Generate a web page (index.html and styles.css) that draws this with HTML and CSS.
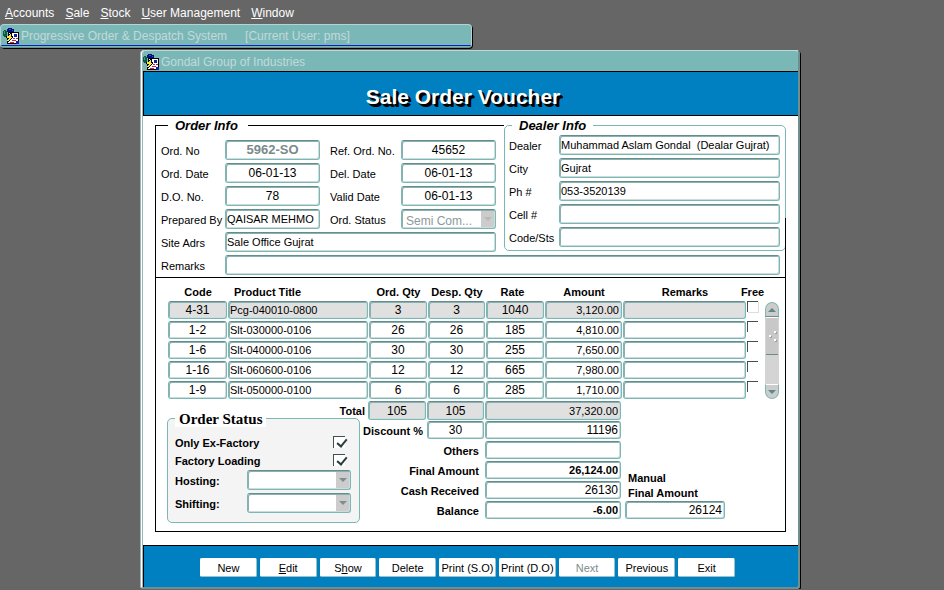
FILE: index.html
```html
<!DOCTYPE html>
<html lang="en">
<head>
<meta charset="utf-8">
<title>Progressive Order &amp; Despatch System</title>
<link rel="stylesheet" href="styles.css">
</head>
<body>
<svg class="defs" aria-hidden="true">
  <symbol id="app-icon" viewBox="0 0 16 16" shape-rendering="crispEdges">
    <path fill="#00107c" d="M5 0h4v1h2v3H4V1h1z"/>
    <path fill="#1c58b0" d="M6 1h2v1H6zM9 2h1v1H9z"/>
    <path fill="#0c5c48" d="M1 2h2v1h1v5H3v1H1V8H0V3h1z"/>
    <path fill="#38a070" d="M1 3h1v3H1z"/>
    <path fill="#000" d="M5 4h11v12H4V9H3V8h2z"/>
    <path fill="#fff" d="M6 5h9v10H5V9h1z"/>
    <path fill="#1020a0" d="M11 6h3v3h-3zM13 13h3v3h-3z"/>
    <path fill="#d02040" d="M10 10h2v1h-2zM13 10h2v1h-2zM9 12h4v1H9zM7 14h4v1H7z"/>
    <path fill="#000" d="M7 5h2v3h1v2H9v1H8v1H7v1H6v1H4v-3h1v-1H3V8h2V7h1V6h1z"/>
    <path fill="#f8e840" d="M7 6h1v3h1v1H8v1H7v1H6v1H4v-1h1v-1h1v-1H4V8h2V7h1z"/>
  </symbol>
</svg>

<nav class="menu">
  <a href="#"><u>A</u>ccounts</a>
  <a href="#"><u>S</u>ale</a>
  <a href="#"><u>S</u>tock</a>
  <a href="#"><u>U</u>ser Management</a>
  <a href="#"><u>W</u>indow</a>
</nav>

<header class="app-bar">
  <svg class="icon" aria-hidden="true"><use href="#app-icon"/></svg>
  <span>Progressive Order &amp; Despatch System</span>
  <span class="user">[Current User: pms]</span>
</header>

<main class="window">
  <div class="title-bar">
    <svg class="icon" aria-hidden="true"><use href="#app-icon"/></svg>
    <span>Gondal Group of Industries</span>
  </div>
  <h1 class="banner">Sale Order Voucher</h1>

  <form class="voucher">
    <div class="info">
      <fieldset class="order">
        <legend>Order Info</legend>
        <div class="order-grid">
          <label for="ord-no">Ord. No</label>
          <input id="ord-no" class="mid locked" value="5962-SO">
          <label class="second" for="ref-no">Ref. Ord. No.</label>
          <input id="ref-no" class="mid" value="45652">
          <label for="ord-date">Ord. Date</label>
          <input id="ord-date" class="mid" value="06-01-13">
          <label class="second" for="del-date">Del. Date</label>
          <input id="del-date" class="mid" value="06-01-13">
          <label for="do-no">D.O. No.</label>
          <input id="do-no" class="mid" value="78">
          <label class="second" for="valid-date">Valid Date</label>
          <input id="valid-date" class="mid" value="06-01-13">
          <label for="prepared">Prepared By</label>
          <input id="prepared" value="QAISAR MEHMO">
          <label class="second" for="ord-status">Ord. Status</label>
          <span class="pick faded">
            <select id="ord-status" disabled><option>Semi Com...</option></select>
          </span>
          <label for="site">Site Adrs</label>
          <input id="site" class="wide" value="Sale Office Gujrat">
        </div>
      </fieldset>
      <fieldset class="dealer">
        <legend>Dealer Info</legend>
        <div class="dealer-grid">
          <label for="dealer">Dealer</label>
          <input id="dealer" value="Muhammad Aslam Gondal  (Dealar Gujrat)">
          <label for="city">City</label>
          <input id="city" value="Gujrat">
          <label for="phone">Ph #</label>
          <input id="phone" value="053-3520139">
          <label for="cell">Cell #</label>
          <input id="cell">
          <label for="sts">Code/Sts</label>
          <input id="sts">
        </div>
      </fieldset>
      <div class="remarks">
        <label for="remarks">Remarks</label>
        <input id="remarks">
      </div>
    </div>

    <section class="lines">
      <div class="items">
        <table>
          <colgroup>
            <col class="c-code"><col><col class="c-qty"><col class="c-desp"><col class="c-qty"><col class="c-amount"><col class="c-remarks"><col class="c-free">
          </colgroup>
          <thead>
            <tr><th>Code</th><th class="left">Product Title</th><th>Ord. Qty</th><th>Desp. Qty</th><th class="rate">Rate</th><th>Amount</th><th>Remarks</th><th><span class="free">Free</span></th></tr>
          </thead>
          <tbody>
            <tr class="current">
              <td><input class="mid" aria-label="Code" value="4-31"></td>
              <td><input aria-label="Product Title" value="Pcg-040010-0800"></td>
              <td><input class="mid" aria-label="Ordered quantity" value="3"></td>
              <td><input class="mid" aria-label="Despatched quantity" value="3"></td>
              <td><input class="mid" aria-label="Rate" value="1040"></td>
              <td><input class="num" aria-label="Amount" value="3,120.00"></td>
              <td><input aria-label="Remarks"></td>
              <td><input type="checkbox" aria-label="Free"></td>
            </tr>
            <tr>
              <td><input class="mid" aria-label="Code" value="1-2"></td>
              <td><input aria-label="Product Title" value="Slt-030000-0106"></td>
              <td><input class="mid" aria-label="Ordered quantity" value="26"></td>
              <td><input class="mid" aria-label="Despatched quantity" value="26"></td>
              <td><input class="mid" aria-label="Rate" value="185"></td>
              <td><input class="num" aria-label="Amount" value="4,810.00"></td>
              <td><input aria-label="Remarks"></td>
              <td><input type="checkbox" aria-label="Free"></td>
            </tr>
            <tr>
              <td><input class="mid" aria-label="Code" value="1-6"></td>
              <td><input aria-label="Product Title" value="Slt-040000-0106"></td>
              <td><input class="mid" aria-label="Ordered quantity" value="30"></td>
              <td><input class="mid" aria-label="Despatched quantity" value="30"></td>
              <td><input class="mid" aria-label="Rate" value="255"></td>
              <td><input class="num" aria-label="Amount" value="7,650.00"></td>
              <td><input aria-label="Remarks"></td>
              <td><input type="checkbox" aria-label="Free"></td>
            </tr>
            <tr>
              <td><input class="mid" aria-label="Code" value="1-16"></td>
              <td><input aria-label="Product Title" value="Slt-060600-0106"></td>
              <td><input class="mid" aria-label="Ordered quantity" value="12"></td>
              <td><input class="mid" aria-label="Despatched quantity" value="12"></td>
              <td><input class="mid" aria-label="Rate" value="665"></td>
              <td><input class="num" aria-label="Amount" value="7,980.00"></td>
              <td><input aria-label="Remarks"></td>
              <td><input type="checkbox" aria-label="Free"></td>
            </tr>
            <tr>
              <td><input class="mid" aria-label="Code" value="1-9"></td>
              <td><input aria-label="Product Title" value="Slt-050000-0100"></td>
              <td><input class="mid" aria-label="Ordered quantity" value="6"></td>
              <td><input class="mid" aria-label="Despatched quantity" value="6"></td>
              <td><input class="mid" aria-label="Rate" value="285"></td>
              <td><input class="num" aria-label="Amount" value="1,710.00"></td>
              <td><input aria-label="Remarks"></td>
              <td><input type="checkbox" aria-label="Free"></td>
            </tr>
          </tbody>
        </table>
        <div class="scroller">
          <button type="button" class="up" aria-label="Scroll up"></button>
          <div class="thumb">
            <svg viewBox="0 0 12 37" aria-hidden="true"><path fill="#fff" d="M8 13h2v2H8zM3 17h2v2H3zM8 21h2v2H8z"/><path fill="#8fa5a5" d="M10 14h1v2H9v-1h1zM5 18h1v2H4v-1h1zM10 22h1v2H9v-1h1z"/></svg>
          </div>
          <button type="button" class="down" aria-label="Scroll down"></button>
        </div>
      </div>

      <div class="summary">
        <fieldset class="status">
          <legend>Order Status</legend>
          <div class="status-grid">
            <label for="ex">Only Ex-Factory</label>
            <input type="checkbox" id="ex" checked>
            <label for="loading">Factory Loading</label>
            <input type="checkbox" id="loading" checked>
            <label for="hosting">Hosting:</label>
            <span class="pick"><select id="hosting"><option></option></select></span>
            <label for="shifting">Shifting:</label>
            <span class="pick"><select id="shifting"><option></option></select></span>
          </div>
        </fieldset>
        <label class="t-total" for="total">Total</label>
        <input class="mid shade t-ord" aria-label="Total ordered" value="105">
        <input class="mid shade t-desp" aria-label="Total despatched" value="105">
        <input class="num shade t-sum" id="total" value="37,320.00">
        <label class="t-discount" for="discount">Discount %</label>
        <input class="mid large t-desp" id="discount" value="30">
        <input class="num large t-sum" aria-label="Discount amount" value="11196">
        <label class="t-label" for="others">Others</label>
        <input class="num t-sum" id="others">
        <label class="t-label" for="final">Final Amount</label>
        <input class="num strong t-sum" id="final" value="26,124.00">
        <label class="t-label" for="cash">Cash Received</label>
        <input class="num large t-sum" id="cash" value="26130">
        <label class="t-label" for="balance">Balance</label>
        <input class="num strong t-sum" id="balance" value="-6.00">
        <label class="t-manual" for="manual">Manual<br>Final Amount</label>
        <input class="num large t-manual-value" id="manual" value="26124">
      </div>
    </section>
  </form>

  <footer class="actions">
    <button type="button">New</button>
    <button type="button"><u>E</u>dit</button>
    <button type="button">S<u>h</u>ow</button>
    <button type="button">Delete</button>
    <button type="button">Print (S.O)</button>
    <button type="button">Print (D.O)</button>
    <button type="button" disabled>Next</button>
    <button type="button">Previous</button>
    <button type="button">Exit</button>
  </footer>
</main>
</body>
</html>
```
FILE: styles.css
```css
:root {
  --teal: #7ab8b8;
  --teal-dark: #628e8e;
  --blue: #0080c0;
  --shade: #e0e0e0;
}

* {
  box-sizing: border-box;
}

body {
  margin: 0;
  background: #666;
  color: #000;
  font: 11px/16px "Liberation Sans", Arial, sans-serif;
}

.defs {
  display: none;
}

.icon {
  width: 16px;
  height: 16px;
  flex: none;
}

/* menu and window bars */
.menu {
  display: flex;
  gap: 11px;
  padding: 5px 5px 3px;
  font-size: 12px;
}

.menu a {
  color: #fff;
  text-decoration: none;
}

.app-bar {
  display: flex;
  align-items: center;
  gap: 2px;
  width: 50%;
  height: 24px;
  padding-left: 2px;
  border: 1px solid #b4d4d4;
  border-bottom-color: #718e8e;
  border-radius: 4px;
  background: linear-gradient(var(--teal) 20px, #1020c0 20px, #1020c0 21px, var(--teal) 21px);
  box-shadow: 1px 1px #000;
  color: #c4d8d8;
  font-size: 12px;
}

.user {
  margin-left: 16px;
}

.window {
  margin: 2px 144px 0 140px;
  border: 1px solid #c0d8d8;
  border-right: 2px solid #708e8e;
  border-bottom: 2px solid #708e8e;
  border-left: 3px double #9ab8b8;
  border-radius: 4px 4px 3px 3px;
  box-shadow: 1px 1px #000;
  background: #fff;
  overflow: hidden;
}

.title-bar {
  display: flex;
  align-items: center;
  gap: 2px;
  height: 20px;
  padding: 2px 0 0;
  background: var(--teal);
  color: #c4d8d8;
  font-size: 12px;
}

.banner {
  margin: 0;
  border: solid #000;
  border-width: 1px 0 1px 1px;
  padding: 14px 16px 7px 0;
  background: var(--blue);
  color: #fff;
  font-size: 21px;
  line-height: 22px;
  text-align: center;
  text-shadow: 2px 2px #000, 3px 3px #000;
}

/* fields */
input,
select {
  width: 100%;
  min-width: 0;
  height: 20px;
  margin: 0;
  padding: 0 1px;
  border: 1px solid var(--teal);
  border-top-color: var(--teal-dark);
  border-radius: 3px;
  background: #fff;
  box-shadow: inset 1px 1px #8cb0b0, inset -1px -1px #d0dcdc;
  color: #000;
  font: inherit;
}

.mid {
  font-size: 12px;
  text-align: center;
}

.large {
  font-size: 12px;
}

.num {
  padding-right: 2px;
  text-align: right;
}

.strong {
  font-weight: bold;
}

.locked {
  color: #7a8a8a;
  font-size: 13px;
  font-weight: bold;
}

.pick {
  position: relative;
  display: block;
}

.pick select {
  display: block;
  appearance: none;
  padding: 0 16px 0 4px;
  background: linear-gradient(#ccc, #ccc) right / 14px 100% no-repeat #fff;
  opacity: 1;
  font-size: 12px;
}

.pick select:disabled {
  color: #8c9a9a;
}

.pick::after {
  content: "";
  position: absolute;
  top: 8px;
  right: 4px;
  border: 4px solid transparent;
  border-top-color: #7a9090;
  border-bottom: 0;
}

.faded::after {
  border-top-color: #b8b8b8;
}

input[type="checkbox"] {
  appearance: none;
  display: block;
  width: 11px;
  height: 11px;
  border: solid #405050;
  border-width: 1px 0 0 1px;
  border-radius: 0;
  box-shadow: none;
}

/* voucher panel */
.voucher {
  padding: 1px 12px 13px;
}

fieldset {
  min-width: 0;
  margin: 0;
  padding: 0;
  border: 0 solid #000;
}

legend {
  padding: 0 7px;
  font-size: 13px;
  font-style: italic;
  font-weight: bold;
  line-height: 17px;
}

.info {
  position: relative;
  display: grid;
  grid-template-columns: 349fr 282fr;
}

.info::after {
  content: "";
  position: absolute;
  top: 101px;
  right: 0;
  bottom: 0;
  border-right: 1px solid #000;
}

.order {
  border-width: 1px 0 0 1px;
  padding: 6px 8px 0 5px;
}

.order legend {
  margin-left: 7px;
  padding-right: 10px;
}

.order-grid {
  display: grid;
  grid-template-columns: 64px 1fr 81px 1fr;
  gap: 3px 0;
  line-height: 22px;
}

.order-grid > *,
.dealer-grid > *,
.remarks > * {
  height: 20px;
}

.second {
  padding-left: 10px;
}

.wide {
  grid-column: 2 / -1;
}

.dealer {
  align-self: start;
  padding: 1px 5px 3px 4px;
  border: 1px solid var(--teal);
  border-radius: 5px;
}

.dealer legend {
  margin-left: 3px;
}

.dealer-grid {
  display: grid;
  grid-template-columns: 50px 1fr;
  gap: 3px 0;
  line-height: 22px;
}

.remarks {
  display: flex;
  grid-column: 1 / -1;
  padding: 3px 6px 2px 5px;
  border-left: 1px solid #000;
  line-height: 22px;
}

.remarks label {
  flex: 0 0 64px;
}

.lines {
  padding: 4px 6px 10px 12px;
  border: 1px solid #000;
}

.items {
  display: flex;
}

table {
  flex: 1;
  width: 0;
  table-layout: fixed;
  border-collapse: collapse;
}

.c-code { width: 60px; }
.c-qty { width: 59px; }
.c-desp { width: 58px; }
.c-amount { width: 78px; }
.c-remarks { width: 124px; }
.c-free { width: 18px; }

th {
  padding: 2px 0 0;
  line-height: 17px;
  white-space: nowrap;
}

.left {
  padding-left: 6px;
  text-align: left;
}

.rate {
  padding-right: 6px;
}

.free {
  display: block;
  margin-left: -7px;
}

td {
  height: 20px;
  padding: 0 1px 0 0;
  vertical-align: top;
}

td input {
  display: block;
  height: 18px;
}

.current input {
  background: var(--shade);
}

.current input[type="checkbox"] {
  background: #fff;
  box-shadow: 1px 1px #ddd;
}

.scroller {
  display: flex;
  flex-direction: column;
  width: 14px;
  height: 97px;
  border-radius: 7px;
  background: #d4d4d4;
  margin-top: 20px;
  overflow: hidden;
}

.scroller button {
  height: 15px;
  padding: 0;
  border: 1px solid var(--teal);
  background: #ccc;
}

.scroller button::before {
  content: "";
  display: block;
  width: 0;
  margin: 0 auto;
  border: 4px solid transparent;
}

.scroller .up {
  border-radius: 7px 7px 0 0;
  border-bottom-color: #6a8c8c;
}

.scroller .up::before {
  border-bottom-color: #5f8888;
  border-top: 0;
}

.scroller .down {
  margin-top: auto;
  border-radius: 0 0 7px 7px;
  border-top-color: #fff;
}

.scroller .down::before {
  border-top-color: #5f8888;
  border-bottom: 0;
}

.thumb {
  height: 38px;
  margin: 0 1px;
  border-top: 1px solid #fff;
  border-bottom: 1px solid #6a8c8c;
  background: #c8c8c8;
}

.thumb svg {
  display: block;
  width: 12px;
  height: 37px;
}

/* totals */
.summary {
  display: grid;
  grid-template-columns: 1fr 7px 59px 58px 137px 157px;
  grid-auto-rows: 20px;
  font-weight: bold;
  line-height: 20px;
}

.summary input {
  height: 18px;
  font-weight: normal;
}

.summary input.strong {
  font-weight: bold;
}

.summary .shade {
  height: 19px;
  background: var(--shade);
}

.summary > label {
  justify-self: end;
  white-space: nowrap;
}

.t-total {
  grid-area: 1 / 1 / 2 / 3;
  margin-right: 3px;
}

.t-ord {
  grid-column: 3;
}

.t-desp {
  grid-column: 4;
}

.t-ord,
.t-desp,
.t-sum {
  margin-right: 1px;
  justify-self: stretch;
}

.summary .t-ord,
.summary .t-desp,
.summary .t-sum {
  width: auto;
}

.t-sum {
  grid-column: 5;
}

.t-discount {
  grid-column: 3 / 4;
  margin-right: 4px;
}

.t-label {
  grid-column: 3 / 5;
  margin-right: 6px;
}

.summary > .t-manual {
  grid-area: 4 / 6 / 6 / 7;
  justify-self: start;
  align-self: end;
  padding-left: 6px;
  line-height: 15px;
}

.summary .t-manual-value {
  grid-area: 6 / 6 / 7 / 7;
  width: 100px;
  margin-left: 3px;
}

.status {
  grid-area: 1 / 1 / 7 / 2;
  align-self: start;
  margin: 9px 1px 0 -1px;
  padding: 7px 8px 6px 7px;
  border: 1px solid var(--teal);
  border-radius: 5px;
  background: #f4f4f4;
}

.status legend {
  padding: 2px 4px 0;
  background: #fff;
  font: bold 15px/15px "Liberation Serif", "Times New Roman", serif;
}

.status-grid {
  display: grid;
  grid-template: 18px 18px 23px 23px / minmax(0, 1fr) 104px;
  line-height: 18px;
  white-space: nowrap;
}

.status-grid select {
  height: 20px;
}

.status-grid label:nth-of-type(n + 3) {
  line-height: 23px;
}

.status-grid input {
  justify-self: end;
  width: 12px;
  height: 12px;
  margin: 2px 6px 0 0;
}

.status-grid input:checked::after {
  content: "";
  display: block;
  width: 4px;
  height: 8px;
  margin: 0 0 0 4px;
  border: solid #2c3c3c;
  border-width: 0 2px 2px 0;
  transform: rotate(40deg);
}

/* action buttons */
.actions {
  display: grid;
  grid-template-columns: repeat(9, 1fr);
  gap: 3px;
  padding: 12px 63px 10px 56px;
  border: solid #000;
  border-width: 1px 0 0 1px;
  background: var(--blue);
}

.actions button {
  height: 19px;
  padding: 0;
  border: 1px solid #fff;
  border-right-color: #9cc4c4;
  border-bottom-color: #9cc4c4;
  border-radius: 2px;
  background: #fff;
  color: #000;
  font: inherit;
  white-space: nowrap;
}

.actions button:disabled {
  color: #7a8c8c;
}
```
